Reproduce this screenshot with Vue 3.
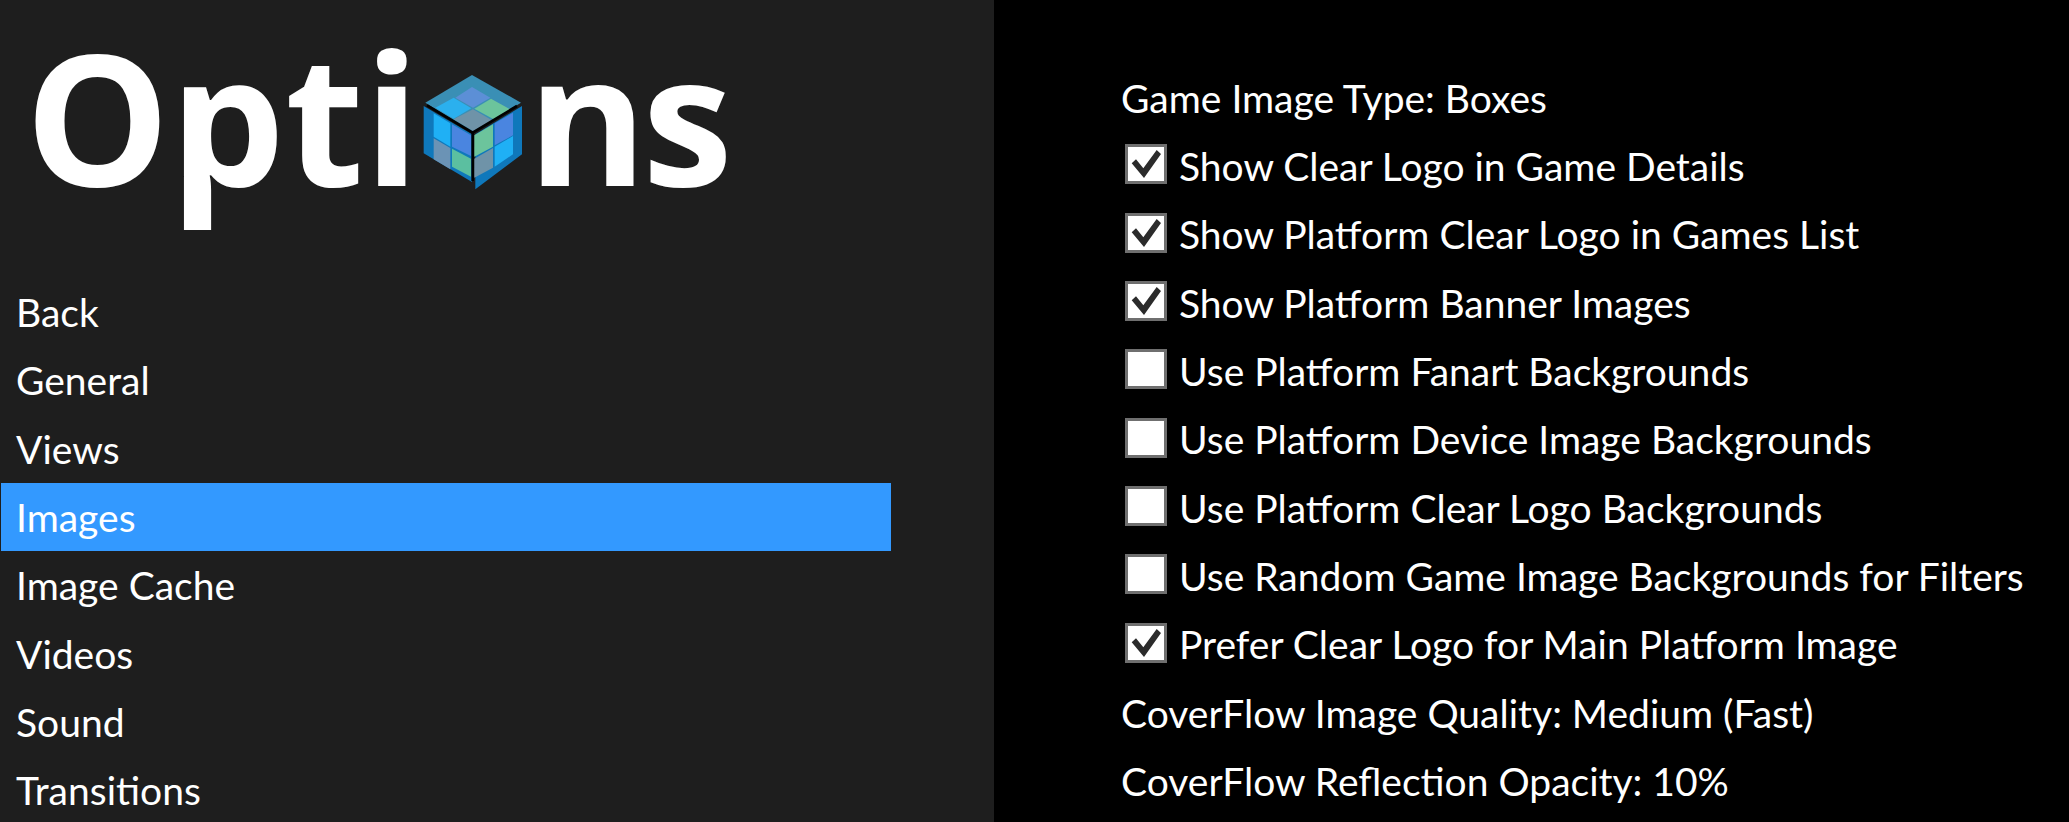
<script setup>
const navItems = ['Back', 'General', 'Views', 'Images', 'Image Cache', 'Videos', 'Sound', 'Transitions']
const selectedNav = 'Images'

const options = [
  { label: 'Game Image Type: Boxes' },
  { label: 'Show Clear Logo in Game Details', checked: true },
  { label: 'Show Platform Clear Logo in Games List', checked: true },
  { label: 'Show Platform Banner Images', checked: true },
  { label: 'Use Platform Fanart Backgrounds', checked: false },
  { label: 'Use Platform Device Image Backgrounds', checked: false },
  { label: 'Use Platform Clear Logo Backgrounds', checked: false },
  { label: 'Use Random Game Image Backgrounds for Filters', checked: false },
  { label: 'Prefer Clear Logo for Main Platform Image', checked: true },
  { label: 'CoverFlow Image Quality: Medium (Fast)' },
  { label: 'CoverFlow Reflection Opacity: 10%' },
]

// cube tiles, in the coordinates of the viewBox
const tiles = [
  { points: '215,83 270,115 218,145 165,115', fill: '#5c8fd6' },
  { points: '160,115 213,147 160,178 105,145', fill: '#2bb0ee' },
  { points: '272,118 330,150 280,180 222,148', fill: '#6cc49c' },
  { points: '218,150 275,183 218,215 160,180', fill: '#6f93a8' },
  { points: '100,162 150,192 150,262 100,232', fill: '#1fb0f5' },
  { points: '155,195 212,228 212,290 155,262', fill: '#4a85e0' },
  { points: '100,237 150,266 150,330 100,300', fill: '#6b93b5' },
  { points: '155,268 212,298 212,352 155,322', fill: '#5bbfa0' },
  { points: '222,228 278,195 278,262 222,292', fill: '#6cc49c' },
  { points: '283,192 338,160 338,228 283,258', fill: '#4a85e0' },
  { points: '222,298 278,266 278,325 222,355', fill: '#6f93a8' },
  { points: '283,262 338,230 338,285 283,322', fill: '#1fb0f5' },
]
</script>

<template>
  <div class="page">
    <aside class="side">
      <h1 class="title">
        <span>Opti</span>
        <svg class="cube" viewBox="70 47 296 345">
          <polygon points="215,47 362,130 217,218 75,130" fill="#3a8fb5" />
          <polygon points="70,140 215,225 215,368 70,282" fill="#0f78bb" />
          <polygon points="365,140 365,285 225,390 225,225" fill="#0f78bb" />
          <polygon v-for="t in tiles" :key="t.points" :points="t.points" :fill="t.fill" />
          <path d="M80 138 217 220 350 140M217 220V365" fill="none" stroke="#000" stroke-width="8" />
        </svg>
        <span class="title-end">ns</span>
      </h1>
      <nav class="nav">
        <div v-for="item in navItems" :key="item" class="row nav-row" :class="{ selected: item === selectedNav }">
          {{ item }}
        </div>
      </nav>
    </aside>

    <main class="list">
      <div v-for="opt in options" :key="opt.label" class="row">
        <span v-if="opt.checked !== undefined" class="box">
          <svg v-if="opt.checked" viewBox="0 0 36 34">
            <polygon points="3.7,16.3 8,12.3 15.3,21.3 28.7,3 33,7 16,31" fill="#2b2b2b" />
          </svg>
        </span>
        <span>{{ opt.label }}</span>
      </div>
    </main>
  </div>
</template>

<style>
html,
body {
  margin: 0;
  background: #000;
  overflow: hidden;
}
</style>

<style scoped>
.page {
  display: grid;
  grid-template-columns: 994px 1fr;
  height: 822px;
  overflow: hidden;
  color: #fff;
  font-family: Lato, "Open Sans", sans-serif;
  font-size: 39px;
}

.side {
  background: #1e1e1e;
  height: 822px;
  overflow: hidden;
}

.title {
  display: flex;
  height: 278px;
  margin: 0;
  padding-left: 25px;
  box-sizing: border-box;
  font-family: "Open Sans", sans-serif;
  font-size: 182px;
  font-weight: 700;
  line-height: 230px;
}

.title-end {
  letter-spacing: -5px;
}

.cube {
  width: 100px;
  height: 115px;
  margin: 75px 5px 0 3px;
}

.nav {
  width: 890px;
  margin-left: 1px;
}

.row {
  display: flex;
  align-items: center;
  height: 68.33px;
}

.nav-row {
  padding-left: 15px;
}

.selected {
  background: #3399ff;
}

.list {
  padding: 63.5px 0 0 127px;
}

.box {
  display: flex;
  width: 42px;
  height: 40px;
  box-sizing: border-box;
  margin: -3px 12px 0 4px;
  border: 3px solid #6f6f6f;
  background: #fff;
}

.box svg {
  width: 100%;
  height: 100%;
}
</style>
